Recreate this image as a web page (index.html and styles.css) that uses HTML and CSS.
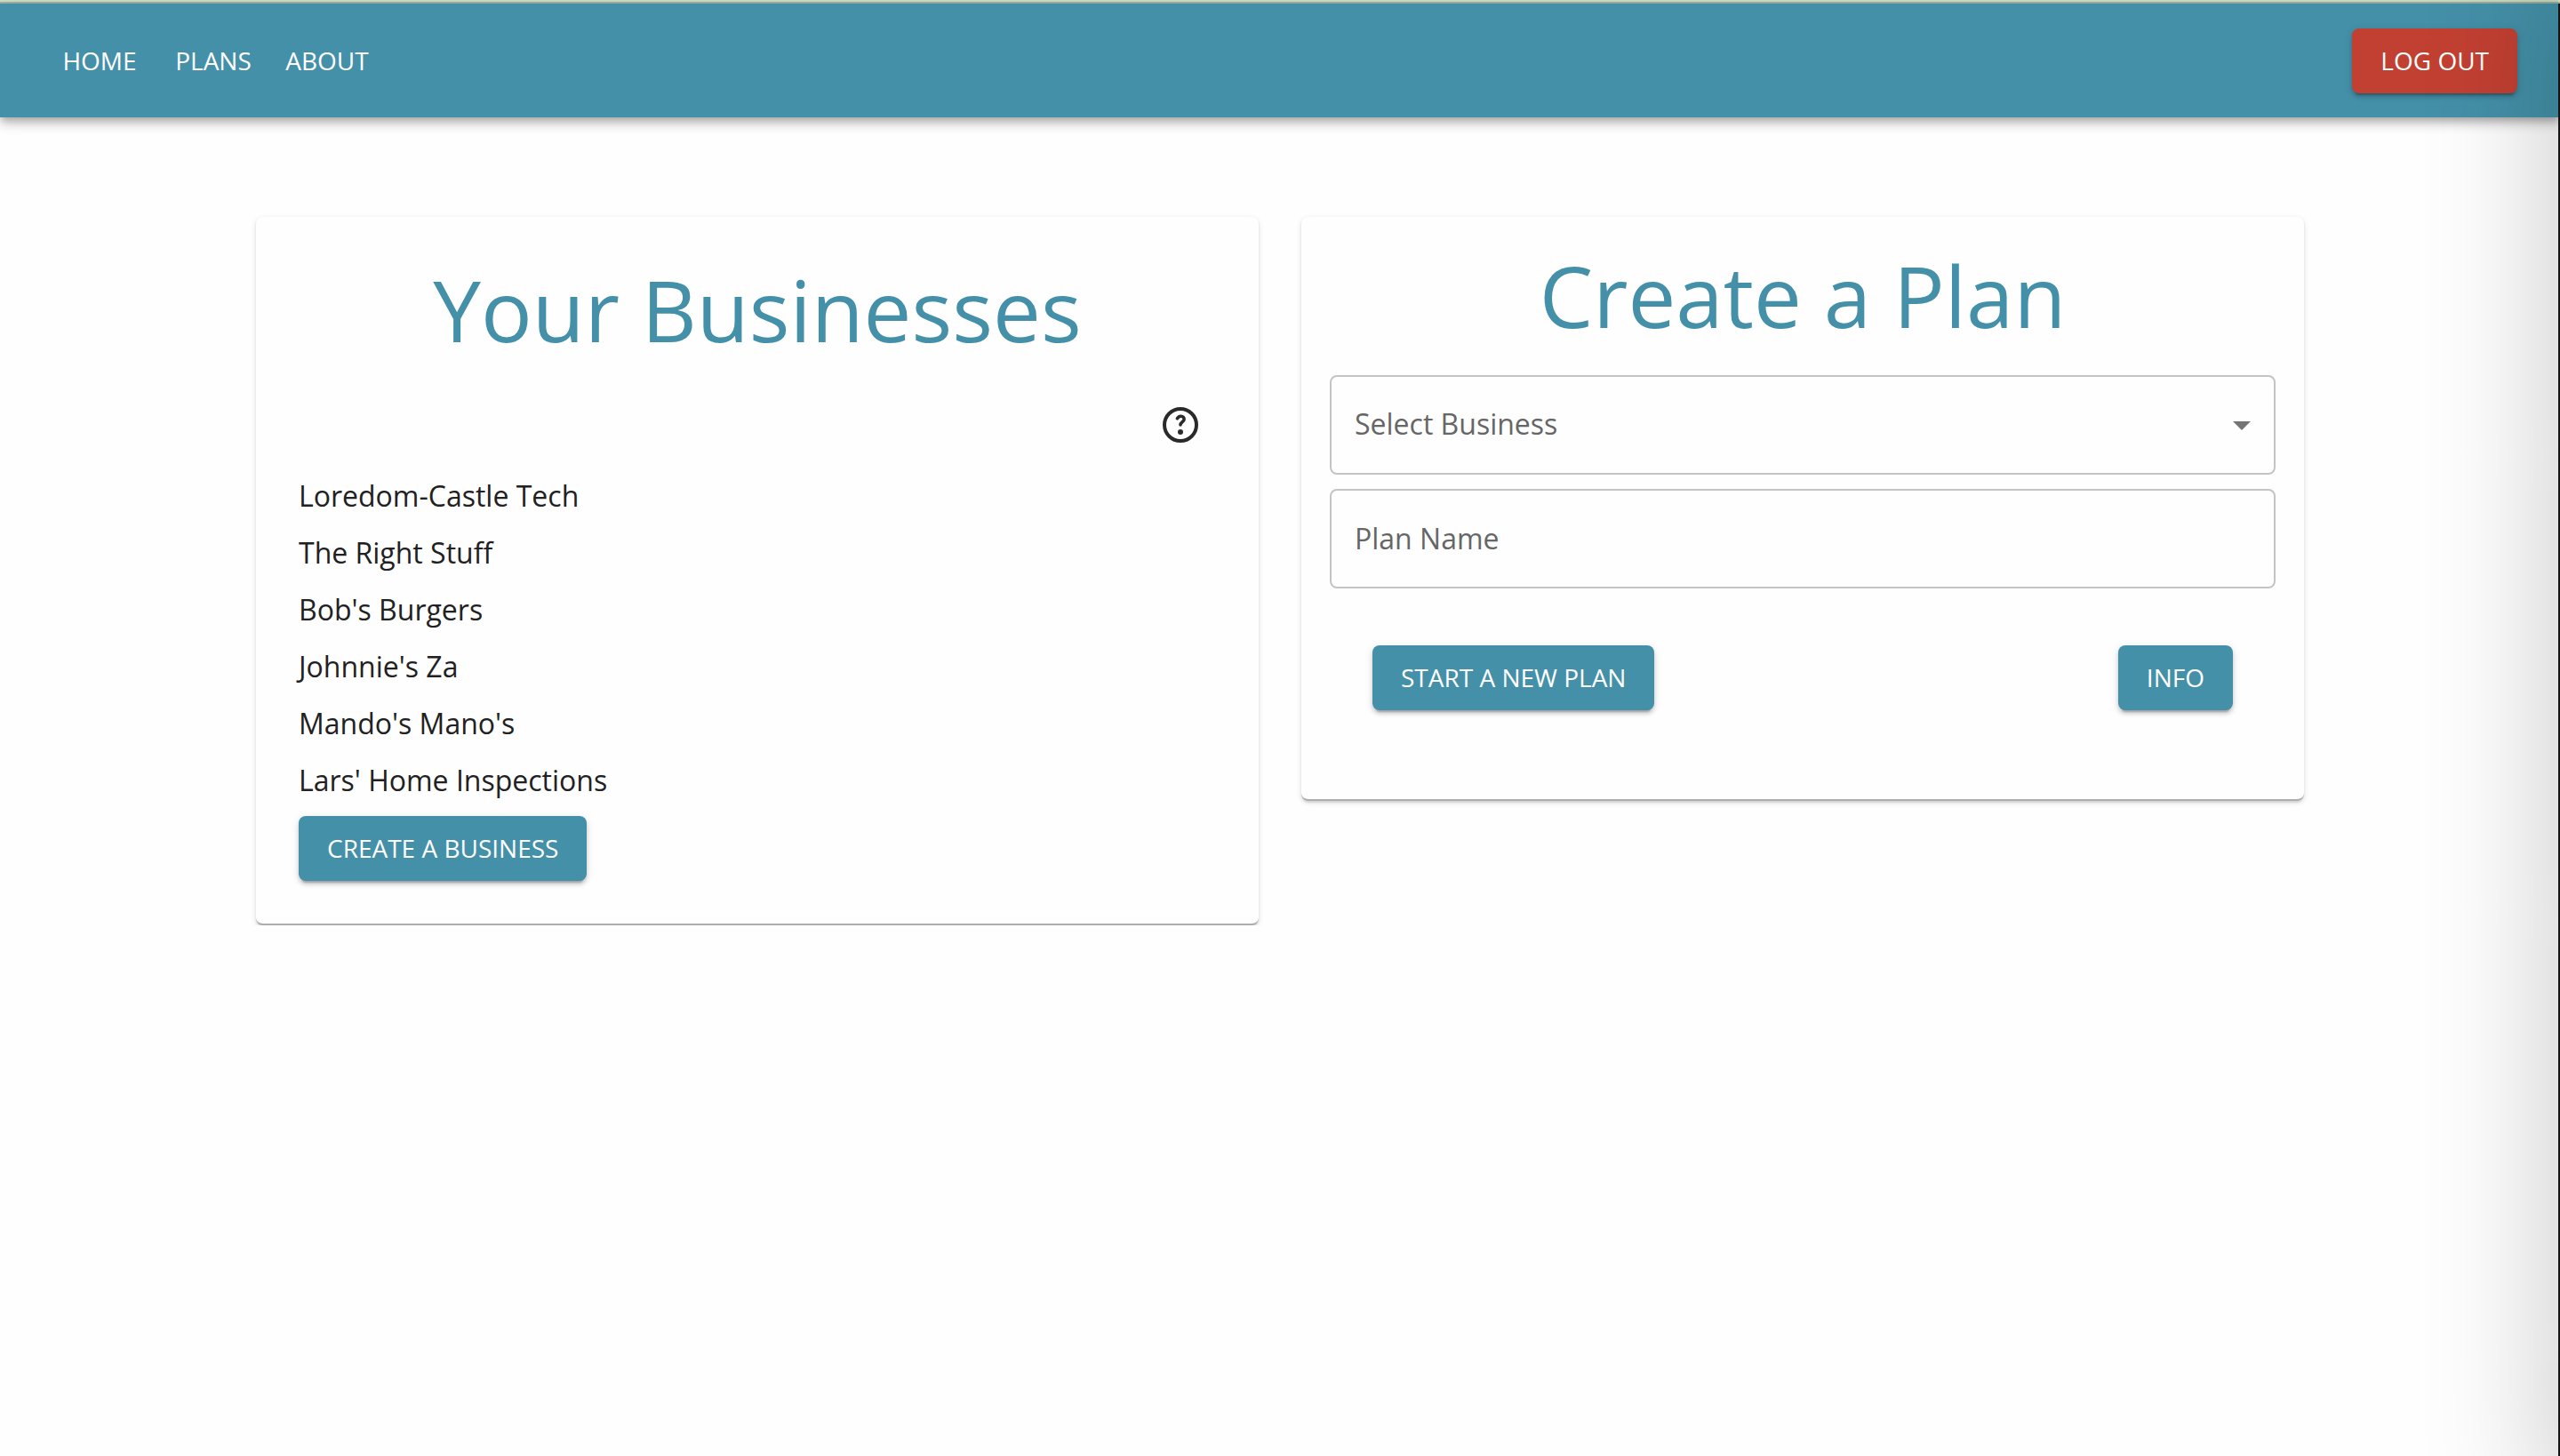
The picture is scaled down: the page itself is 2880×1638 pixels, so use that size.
FILE: index.html
```html
<!DOCTYPE html>
<html lang="en">
<head>
  <meta charset="utf-8">
  <meta name="viewport" content="width=device-width, initial-scale=1">
  <title>Plans</title>
  <link rel="stylesheet" href="styles.css">
</head>
<body>
  <div class="top-strip"></div>
  <header class="app-bar">
    <nav class="nav">
      <a class="nav-link" href="#home">HOME</a>
      <a class="nav-link" href="#plans">PLANS</a>
      <a class="nav-link" href="#about">ABOUT</a>
    </nav>
    <button class="button button-danger" type="button">LOG OUT</button>
  </header>

  <main class="content">
    <section class="card card-businesses">
      <h1 class="title">Your Businesses</h1>
      <button class="icon-button" type="button" aria-label="Help">
        <svg class="icon" viewBox="0 0 24 24" aria-hidden="true">
          <circle cx="12" cy="12" r="9" fill="none" stroke="currentColor" stroke-width="2"/>
          <path d="M10.2 8.4C10.7 7.6 11.4 7.1 12.3 7.15C13.4 7.2 14.1 7.9 14.05 8.9C14 10.2 12 10.5 12 12" fill="none" stroke="currentColor" stroke-width="1.8" stroke-linecap="round"/>
          <circle cx="12" cy="16" r="1.5" fill="currentColor"/>
        </svg>
      </button>
      <ul class="business-list">
        <li>Loredom-Castle Tech</li>
        <li>The Right Stuff</li>
        <li>Bob's Burgers</li>
        <li>Johnnie's Za</li>
        <li>Mando's Mano's</li>
        <li>Lars' Home Inspections</li>
      </ul>
      <button class="button" type="button">CREATE A BUSINESS</button>
    </section>

    <section class="card card-plan">
      <h1 class="title">Create a Plan</h1>
      <form class="plan-form">
        <div class="select-wrap">
          <select class="field" aria-label="Select Business">
            <option>Select Business</option>
            <option>Loredom-Castle Tech</option>
            <option>The Right Stuff</option>
            <option>Bob's Burgers</option>
            <option>Johnnie's Za</option>
            <option>Mando's Mano's</option>
            <option>Lars' Home Inspections</option>
          </select>
          <svg class="icon select-arrow" viewBox="0 0 24 24" aria-hidden="true"><path d="M7 10l5 5 5-5z" fill="currentColor"/></svg>
        </div>
        <input class="field" type="text" placeholder="Plan Name" aria-label="Plan Name">
        <div class="actions">
          <button class="button" type="button">START A NEW PLAN</button>
          <button class="button" type="button">INFO</button>
        </div>
      </form>
    </section>
  </main>
  <div class="edge"></div>
  <div class="edge-shade"></div>
</body>
</html>
```
FILE: styles.css
```css
* {
  box-sizing: border-box;
}

body {
  margin: 0;
  background: #fefefe;
  color: #212121;
  font-family: "Open Sans", sans-serif;
  font-size: 32px;
  line-height: 48px;
}

.top-strip {
  height: 4px;
  background: #cfe0c5;
  border-bottom: 2px solid #a1b5a3;
}

.app-bar {
  display: flex;
  align-items: center;
  justify-content: space-between;
  min-height: 128px;
  padding: 0 48px;
  background: #4490a8;
  box-shadow: 0 4px 8px -2px rgba(0, 0, 0, .2), 0 8px 10px rgba(0, 0, 0, .14), 0 2px 20px rgba(0, 0, 0, .12);
}

.nav {
  display: flex;
}

.nav-link {
  min-width: 128px;
  color: #fff;
  font-size: 28px;
  line-height: 49px;
  text-align: center;
  text-decoration: none;
}

.button {
  min-width: 128px;
  padding: 12px 32px;
  border: 0;
  border-radius: 8px;
  background: #4490a8;
  color: #fff;
  font: inherit;
  font-size: 28px;
  line-height: 49px;
  box-shadow: 0 6px 2px -4px rgba(0, 0, 0, .2), 0 4px 4px rgba(0, 0, 0, .14), 0 2px 10px rgba(0, 0, 0, .12);
}

.button-danger {
  background: #c24032;
}

.content {
  display: grid;
  grid-template-columns: 1fr 1fr;
  align-items: start;
  gap: 48px;
  width: 80%;
  margin: 112px auto 0;
}

.card {
  display: flex;
  flex-direction: column;
  border-bottom: 2px solid #acacac;
  border-radius: 8px;
  background: #fefefe;
  box-shadow: 0 2px 2px rgba(0, 0, 0, .1), 0 2px 6px rgba(0, 0, 0, .12);
}

.card-businesses {
  align-items: flex-start;
  padding: 48px;
}

.card-plan {
  padding: 32px 32px 100px;
}

.title {
  align-self: stretch;
  margin: 0 0 34px;
  color: #4490a8;
  font-size: 96px;
  font-weight: 400;
  line-height: 112px;
  text-align: center;
}

.icon {
  display: block;
  width: 48px;
  height: 48px;
}

.icon-button {
  align-self: flex-end;
  padding: 16px;
  border: 0;
  background: none;
  color: #2a2a2a;
}

.business-list {
  margin: 16px 0 0;
  padding: 0;
  list-style: none;
}

.business-list li {
  margin-bottom: 16px;
}

.plan-form {
  display: flex;
  flex-direction: column;
  gap: 16px;
}

.select-wrap {
  position: relative;
}

.field {
  display: block;
  width: 100%;
  height: 112px;
  padding: 0 26px 2px;
  border: 2px solid #c4c4c4;
  border-radius: 8px;
  background: none;
  color: #666;
  font: inherit;
  appearance: none;
}

.field::placeholder {
  color: #666;
  opacity: 1;
}

.select-arrow {
  position: absolute;
  top: 32px;
  right: 14px;
  color: #757575;
  pointer-events: none;
}

.actions {
  display: flex;
  justify-content: space-between;
  padding: 48px 48px 0;
}

/* dark window edge on the right and the shade it casts */
.edge {
  position: fixed;
  top: 4px;
  right: 0;
  bottom: 0;
  width: 2px;
  background: #141414;
}

.edge-shade {
  position: fixed;
  top: -40px;
  right: -398px;
  bottom: -60px;
  width: 400px;
  box-shadow: 0 0 150px rgba(0, 0, 0, .23);
  pointer-events: none;
}
```
